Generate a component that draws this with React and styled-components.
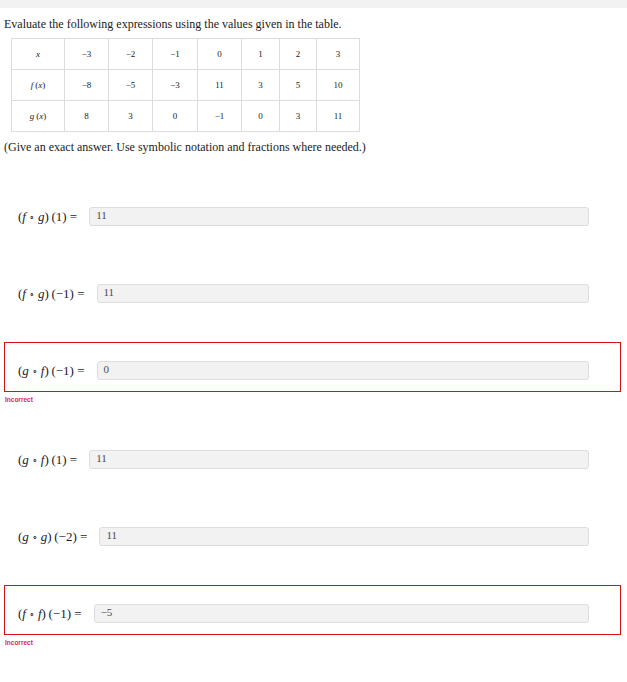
import React from 'react';
import styled, { createGlobalStyle } from 'styled-components';

const GlobalStyle = createGlobalStyle`
  html, body {
    margin: 0;
    padding: 0;
    background: #ffffff;
  }
  body {
    font-family: "Liberation Serif", "Times New Roman", serif;
    color: #1b1b1b;
  }
`;

const TopBar = styled.div`
  height: 8px;
  background: #f2f2f2;
`;

const Page = styled.div`
  padding: 0 6px 0 4px;
`;

const Prompt = styled.p`
  margin: 9px 0 0;
  font-size: 12px;
  line-height: 14px;
`;

const ValueTable = styled.table`
  margin: 7px 0 0 7px;
  border-collapse: collapse;
  table-layout: fixed;
  width: 340px;
`;

const Cell = styled.td`
  width: ${(p) => p.$w}px;
  height: 30px;
  padding: 0;
  border: 1px solid #dcdcdc;
  text-align: center;
  vertical-align: middle;
  font-size: 9px;
`;

const Note = styled.p`
  margin: 8px 0 0;
  font-size: 12px;
  line-height: 14px;
`;

const Questions = styled.div`
  margin-top: 34px;
  display: flex;
  flex-direction: column;
  gap: 27px;
`;

const Item = styled.div`
  display: flex;
  flex-direction: column;
`;

const AnswerBox = styled.div`
  display: flex;
  align-items: center;
  gap: 12px;
  padding: 18px 31px 11px 13px;
  border: 1px solid ${(p) => (p.$wrong ? '#d0121b' : 'transparent')};
`;

const Label = styled.span`
  font-size: 13px;
  white-space: nowrap;
  color: #1a1a2e;
`;

const V = styled.i`
  font-style: italic;
`;

const Op = styled.span`
  margin: 0 3px;
  font-size: 9px;
`;

const Field = styled.div`
  flex: 1;
  height: 17px;
  padding: 0 6px;
  background: #f2f2f2;
  border: 1px solid #dddddd;
  border-radius: 3px;
  font-size: 11px;
  line-height: 15px;
  color: #4a4a55;
`;

const Verdict = styled.div`
  margin: 3px 0 0 1px;
  font-family: "Liberation Sans", Arial, sans-serif;
  font-weight: bold;
  font-size: 6.5px;
  line-height: 9px;
  color: #e0245a;
`;

const widths = [52, 43, 43, 44, 43, 37, 36, 42];

const FX = ({ n }) => (
  <>
    <V>{n}</V>&thinsp;(<V>x</V>)
  </>
);

const rows = [
  [<V>x</V>, '−3', '−2', '−1', '0', '1', '2', '3'],
  [<FX n="f" />, '−8', '−5', '−3', '11', '3', '5', '10'],
  [<FX n="g" />, '8', '3', '0', '−1', '0', '3', '11'],
];

const questions = [
  { a: 'f', b: 'g', arg: '1', value: '11' },
  { a: 'f', b: 'g', arg: '−1', value: '11' },
  { a: 'g', b: 'f', arg: '−1', value: '0', wrong: true },
  { a: 'g', b: 'f', arg: '1', value: '11' },
  { a: 'g', b: 'g', arg: '−2', value: '11' },
  { a: 'f', b: 'f', arg: '−1', value: '−5', wrong: true },
];

export default function App() {
  return (
    <>
      <GlobalStyle />
      <TopBar />
      <Page>
        <Prompt>Evaluate the following expressions using the values given in the table.</Prompt>
        <ValueTable>
          <tbody>
            {rows.map((row, i) => (
              <tr key={i}>
                {row.map((c, j) => (
                  <Cell key={j} $w={widths[j]}>
                    {c}
                  </Cell>
                ))}
              </tr>
            ))}
          </tbody>
        </ValueTable>
        <Note>(Give an exact answer. Use symbolic notation and fractions where needed.)</Note>
        <Questions>
          {questions.map((q, i) => (
            <Item key={i}>
              <AnswerBox $wrong={q.wrong}>
                <Label>
                  (<V>{q.a}</V>
                  <Op>∘</Op>
                  <V>{q.b}</V>)&thinsp;({q.arg}) =
                </Label>
                <Field>{q.value}</Field>
              </AnswerBox>
              {q.wrong && <Verdict>Incorrect</Verdict>}
            </Item>
          ))}
        </Questions>
      </Page>
    </>
  );
}
